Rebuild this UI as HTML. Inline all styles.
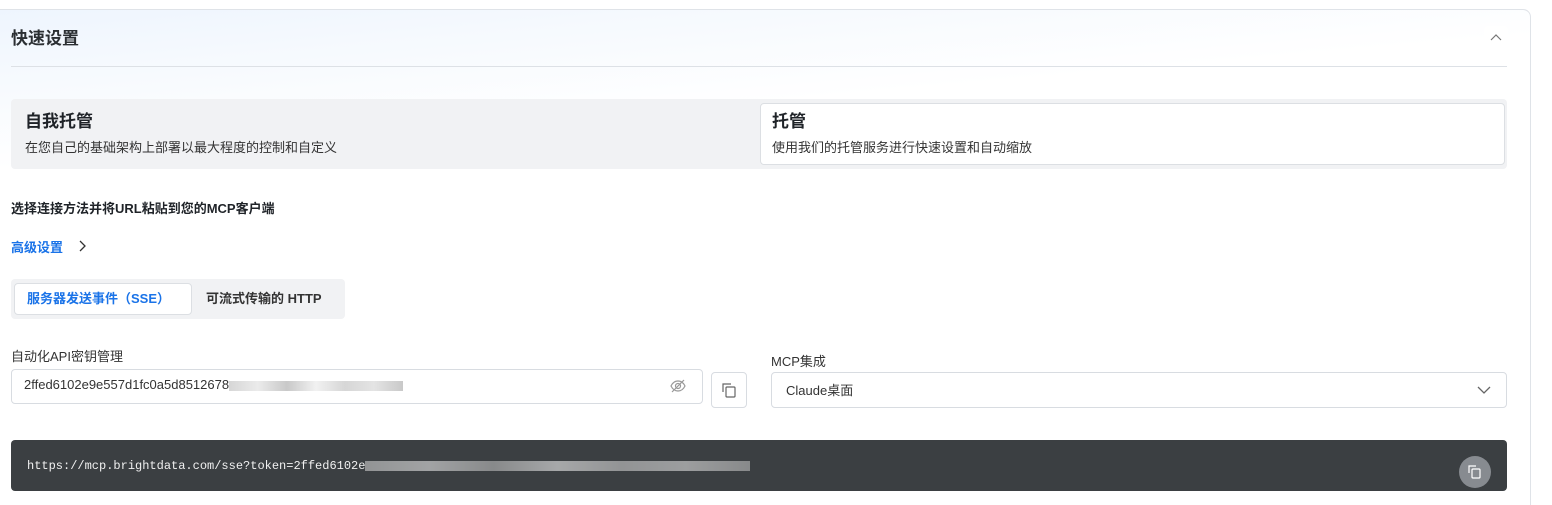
<!DOCTYPE html>
<html><head><meta charset="utf-8"><style>
*{box-sizing:border-box;margin:0;padding:0}
html,body{width:1552px;height:505px;overflow:hidden}
body{background:#fff;font-family:"Liberation Sans","Noto Sans CJK SC",sans-serif;color:#1f2328;position:relative}
.card{position:absolute;left:-10px;top:9px;width:1541px;height:520px;border:1px solid #dfe3e8;border-radius:8px;background:linear-gradient(175deg,#eef5fe 0px,#f5f9fe 60px,#fff 160px)}
.a{position:absolute}
.title{left:11px;top:24px;font-size:17px;font-weight:700;color:#2b2f33}
.colbtn{left:1484px;top:26px;width:24px;height:24px;background:#fff;border-radius:4px}
.hr{left:11px;top:66px;width:1496px;height:1px;background:#dde1e6}
.seg{left:11px;top:99px;width:1496px;height:70px;background:#f1f2f4;border-radius:4px}
.tabw{left:760px;top:103px;width:745px;height:62px;background:#fff;border:1px solid #dcdfe3;border-radius:4px}
.h{font-size:17px;font-weight:700;color:#1f2328}
.s{font-size:13px;color:#333}
.blue{color:#1a73e8}
.tg{left:11px;top:279px;width:334px;height:40px;background:#f1f2f4;border-radius:4px}
.tga{left:14px;top:283px;width:178px;height:32px;background:#fff;border:1px solid #dcdfe3;border-radius:4px;font-size:13px;font-weight:700;color:#1a73e8;padding:4px 0 0 12px}
.inp{border:1px solid #d8dce1;border-radius:4px;background:#fff}
.dark{left:11px;top:440px;width:1496px;height:51px;background:#3b3f42;border-radius:4px}
.mono{font-family:"Liberation Mono",monospace;font-size:12px;color:#f0f0f0}
.blur{display:inline-block;height:10px;vertical-align:middle;background:linear-gradient(90deg,#ccc,#e6e6e6,#bbb,#eee,#ccc,#ddd,#bbb);opacity:.8}
</style></head><body>
<div class="card"></div>
<div class="a title">快速设置</div>
<div class="a colbtn"><svg width="24" height="24"><path d="M7 14l5-5 5 5" fill="none" stroke="#777" stroke-width="1.2"/></svg></div>
<div class="a hr"></div>
<div class="a seg"></div>
<div class="a tabw"></div>
<div class="a h" style="left:25px;top:107px">自我托管</div>
<div class="a s" style="left:25px;top:137px">在您自己的基础架构上部署以最大程度的控制和自定义</div>
<div class="a h" style="left:772px;top:107px">托管</div>
<div class="a s" style="left:772px;top:137px">使用我们的托管服务进行快速设置和自动缩放</div>
<div class="a" style="left:11px;top:198px;font-size:13px;font-weight:700;color:#1f2328">选择连接方法并将URL粘贴到您的MCP客户端</div>
<div class="a blue" style="left:11px;top:237px;font-size:13px;font-weight:700">高级设置</div>
<svg class="a" style="left:76px;top:238px" width="12" height="16"><path d="M4 3l5 5-5 5" fill="none" stroke="#333" stroke-width="1.3"/></svg>
<div class="a tg"></div>
<div class="a tga">服务器发送事件（SSE）</div>
<div class="a" style="left:206px;top:288px;font-size:13px;font-weight:700;color:#333">可流式传输的 HTTP</div>
<div class="a" style="left:11px;top:346px;font-size:13px;color:#333">自动化API密钥管理</div>
<div class="a inp" style="left:11px;top:369px;width:692px;height:35px"></div>
<div class="a" style="left:24px;top:377px;font-size:13px;color:#333">2ffed6102e9e557d1fc0a5d8512678<span class="blur" style="width:174px"></span></div>
<svg class="a" style="left:669px;top:377px" width="18" height="18"><path d="M2 9c2-4 5-5 7-5s5 1 7 5c-2 4-5 5-7 5s-5-1-7-5zM3 15L15 3" fill="none" stroke="#999" stroke-width="1.2"/><circle cx="9" cy="9" r="2.5" fill="none" stroke="#999" stroke-width="1.2"/></svg>
<div class="a inp" style="left:711px;top:372px;width:36px;height:36px"></div>
<svg class="a" style="left:720px;top:381px" width="18" height="18"><path d="M3 11V3h8" fill="none" stroke="#666" stroke-width="1.2"/><rect x="6" y="6" width="9" height="10" rx="1" fill="none" stroke="#666" stroke-width="1.2"/></svg>
<div class="a" style="left:771px;top:351px;font-size:13px;color:#333">MCP集成</div>
<div class="a inp" style="left:771px;top:372px;width:736px;height:36px"></div>
<div class="a" style="left:786px;top:380px;font-size:13px;color:#333">Claude桌面</div>
<svg class="a" style="left:1476px;top:382px" width="16" height="16"><path d="M2 5l6 6 6-6" fill="none" stroke="#666" stroke-width="1.3"/></svg>
<div class="a dark"></div>
<div class="a mono" style="left:27px;top:459px">https://mcp.brightdata.com/sse?token=2ffed6102e<span class="blur" style="width:385px;opacity:.6"></span></div>
<div class="a" style="left:1459px;top:456px;width:32px;height:32px;border-radius:50%;background:#878b90"></div>
<svg class="a" style="left:1466px;top:463px" width="18" height="18"><path d="M3 10V3h7" fill="none" stroke="#fff" stroke-width="1.2"/><rect x="6" y="6" width="8" height="9" rx="1" fill="none" stroke="#fff" stroke-width="1.2"/></svg>
</body></html>
